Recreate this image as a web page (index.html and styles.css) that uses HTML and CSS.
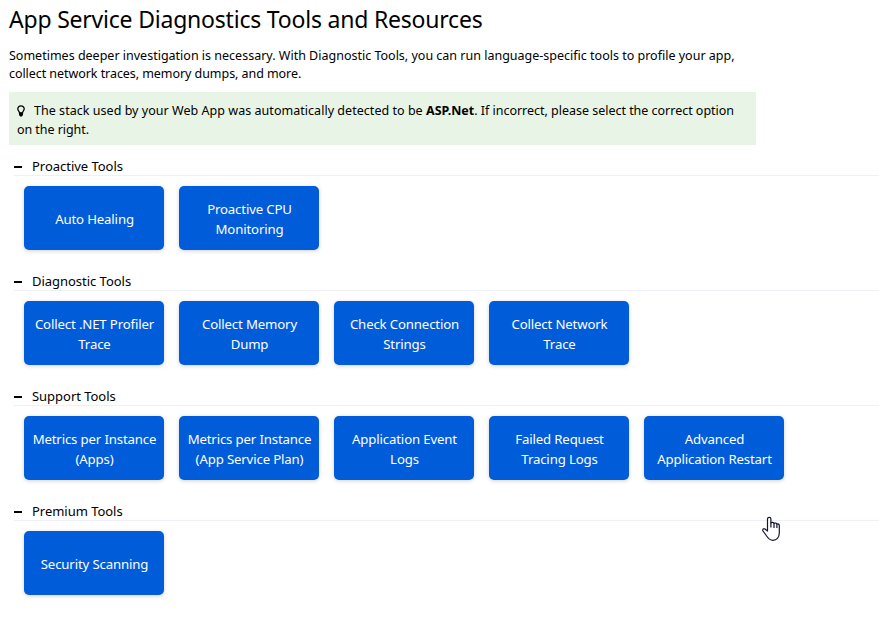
FILE: index.html
```html
<!DOCTYPE html>
<html lang="en">
<head>
<meta charset="utf-8">
<title>App Service Diagnostics Tools and Resources</title>
<link rel="stylesheet" href="styles.css">
</head>
<body>
<main class="page">
  <h1 class="title">App Service Diagnostics Tools and Resources</h1>
  <p class="intro">Sometimes deeper investigation is necessary. With Diagnostic Tools, you can run language-specific tools to profile your app,<br><span class="tight">collect network traces, memory dumps, and more.</span></p>
  <div class="notice"><svg class="bulb" viewBox="0 0 8 12" width="8" height="12"><path d="M2.500 8C2.500 6.500.8 5.800.8 3.800A3.200 3 0 0 1 7.200 3.800C7.200 5.800 5.500 6.500 5.500 8Z" fill="none" stroke="#000" stroke-width="1.300"/><path d="M2 7.500h4v2.500L4.800 11.500H3.200L2 10Z"/></svg><span class="lead">The stack used by your Web App was automatically detected to be </span><b>ASP.Net</b><span class="rest">. If incorrect, please select the correct option</span><br><span class="tight">on the right.</span></div>

  <section class="group">
    <h2 class="heading"><span class="minus"></span>Proactive Tools</h2>
    <div class="tiles">
      <button class="tile">Auto Healing</button>
      <button class="tile">Proactive CPU<br>Monitoring</button>
    </div>
  </section>
  <section class="group">
    <h2 class="heading"><span class="minus"></span>Diagnostic Tools</h2>
    <div class="tiles">
      <button class="tile">Collect .NET Profiler<br>Trace</button>
      <button class="tile">Collect Memory<br>Dump</button>
      <button class="tile">Check Connection<br>Strings</button>
      <button class="tile">Collect Network<br>Trace</button>
    </div>
  </section>
  <section class="group">
    <h2 class="heading"><span class="minus"></span>Support Tools</h2>
    <div class="tiles">
      <button class="tile">Metrics per Instance<br>(Apps)</button>
      <button class="tile">Metrics per Instance<br>(App Service Plan)</button>
      <button class="tile">Application Event<br>Logs</button>
      <button class="tile">Failed Request<br>Tracing Logs</button>
      <button class="tile">Advanced<br>Application Restart</button>
    </div>
  </section>
  <section class="group">
    <h2 class="heading"><span class="minus"></span>Premium Tools</h2>
    <div class="tiles">
      <button class="tile">Security Scanning</button>
    </div>
  </section>
</main>
<svg class="pointer" viewBox="0 0 18 25" width="18" height="25"><path d="M5.500 15V3a1.700 1.700 0 0 1 3.400 0V7C9.500 6 12 6 12 7.500C13 6.600 14.700 7 14.900 8.200C16 7.600 17.300 8.200 17.300 9.500V17C17.300 21.500 14.500 24.300 11 24.300C8 24.300 6.500 22.800 5 20.500L1 15C0 13.500 1.600 12.200 3 13Z" fill="#fff" stroke="#15152a" stroke-width="1.200" stroke-linejoin="round"/><path d="M8.900 6.500V11.500M12 7.500V12M14.900 8.200V12" fill="none" stroke="#15152a" stroke-width="1.200"/></svg>
</body>
</html>
```
FILE: styles.css
```css
* { box-sizing: border-box; }
body {
  margin: 0;
  height: 619px;
  overflow: hidden;
  background: #fff;
  color: #000;
  font-family: "Noto Sans", "Open Sans", sans-serif;
  font-size: 13px;
}
.page { padding: 3px 0 0 9px; }
.title {
  margin: 0;
  font-size: 23px;
  line-height: 32px;
  font-weight: 400;
  letter-spacing: -.21px;
  white-space: nowrap;
}
.intro {
  margin: 12px 0 9px;
  font-size: 12.5px;
  line-height: 18px;
  white-space: nowrap;
}
.tight { letter-spacing: -.06px; }
.notice {
  width: 747px;
  height: 53px;
  padding: 9px 8px;
  background: #e8f4e6;
  line-height: 19px;
  font-size: 12.5px;
  white-space: nowrap;
}
.lead { letter-spacing: .035px; }
.rest { letter-spacing: -.02px; }
.bulb { margin-right: 9px; vertical-align: -2px; }
.group { height: 115px; padding: 11px 0 0 5px; }
.heading {
  display: flex;
  align-items: center;
  height: 20px;
  margin: 0;
  border-bottom: 1px solid #eeeefc;
  font-size: 13px;
  font-weight: 400;
  letter-spacing: -.03px;
}
.minus { width: 8px; height: 2px; margin: 3px 10px 0 0; background: #000; }
.tiles { display: flex; gap: 15px; padding: 10px 0 0 10px; }
.tile {
  flex: none;
  width: 140px;
  height: 64px;
  padding: 2px 0 0 1px;
  border: 0;
  border-radius: 5px;
  background: #015cda;
  box-shadow: 0 1px 4px rgba(0, 0, 0, .18);
  color: #fff;
  font: 400 13.2px/20px "Noto Sans", "Open Sans", sans-serif;
  letter-spacing: -.14px;
  white-space: nowrap;
}
.pointer { position: absolute; left: 762px; top: 516px; }
```
